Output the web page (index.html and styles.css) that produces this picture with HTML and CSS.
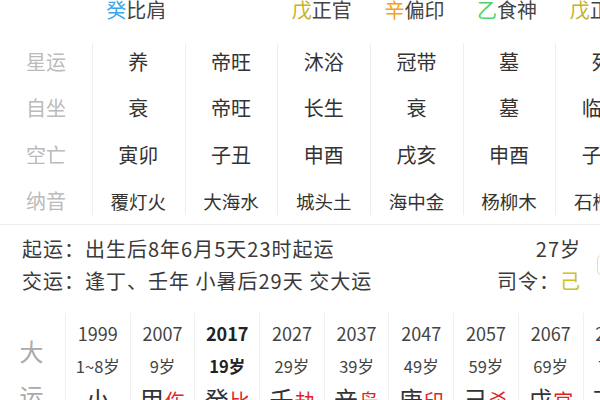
FILE: index.html
```html
<!DOCTYPE html>
<html lang="zh">
<head>
<meta charset="utf-8">
<link rel="stylesheet" href="styles.css">
</head>
<body>
<div class="page">
  <div class="toprow">
    <div class="tcell"></div>
    <div class="tcell"><span class="c-blue">癸</span>比肩</div>
    <div class="tcell"></div>
    <div class="tcell"><span class="c-olive">戊</span>正官</div>
    <div class="tcell"><span class="c-orange">辛</span>偏印</div>
    <div class="tcell"><span class="c-green">乙</span>食神</div>
    <div class="tcell"><span class="c-olive">戊</span>正官</div>
  </div>

  <div class="bazi">
    <div class="bcol labels">
      <div class="bcell">星运</div>
      <div class="bcell">自坐</div>
      <div class="bcell">空亡</div>
      <div class="bcell">纳音</div>
    </div>
    <div class="bcol">
      <div class="bcell">养</div>
      <div class="bcell">衰</div>
      <div class="bcell">寅卯</div>
      <div class="bcell sm">覆灯火</div>
    </div>
    <div class="bcol">
      <div class="bcell">帝旺</div>
      <div class="bcell">帝旺</div>
      <div class="bcell">子丑</div>
      <div class="bcell sm">大海水</div>
    </div>
    <div class="bcol">
      <div class="bcell">沐浴</div>
      <div class="bcell">长生</div>
      <div class="bcell">申酉</div>
      <div class="bcell sm">城头土</div>
    </div>
    <div class="bcol">
      <div class="bcell">冠带</div>
      <div class="bcell">衰</div>
      <div class="bcell">戌亥</div>
      <div class="bcell sm">海中金</div>
    </div>
    <div class="bcol">
      <div class="bcell">墓</div>
      <div class="bcell">墓</div>
      <div class="bcell">申酉</div>
      <div class="bcell sm">杨柳木</div>
    </div>
    <div class="bcol">
      <div class="bcell">死</div>
      <div class="bcell">临官</div>
      <div class="bcell">子丑</div>
      <div class="bcell sm">石榴木</div>
    </div>
  </div>

  <div class="divider"></div>

  <div class="info">
    <div class="info-left">
      <div class="line">起运：出生后8年6月5天23时起运</div>
      <div class="line">交运：逢丁、壬年 小暑后29天 交大运</div>
    </div>
    <div class="info-right">
      <div class="line">27岁</div>
      <div class="line">司令：<span class="c-yellow">己</span></div>
    </div>
    <div class="info-box"></div>
  </div>

  <div class="dayun">
    <div class="dlabel">
      <div>大</div>
      <div>运</div>
    </div>
    <div class="dcol">
      <div class="dyear">1999</div>
      <div class="dage">1~8岁</div>
      <div class="dstem">小</div>
    </div>
    <div class="dcol">
      <div class="dyear">2007</div>
      <div class="dage">9岁</div>
      <div class="dstem">甲<span class="god">伤</span></div>
    </div>
    <div class="dcol cur">
      <div class="dyear">2017</div>
      <div class="dage">19岁</div>
      <div class="dstem">癸<span class="god">比</span></div>
    </div>
    <div class="dcol">
      <div class="dyear">2027</div>
      <div class="dage">29岁</div>
      <div class="dstem">壬<span class="god">劫</span></div>
    </div>
    <div class="dcol">
      <div class="dyear">2037</div>
      <div class="dage">39岁</div>
      <div class="dstem">辛<span class="god">枭</span></div>
    </div>
    <div class="dcol">
      <div class="dyear">2047</div>
      <div class="dage">49岁</div>
      <div class="dstem">庚<span class="god">印</span></div>
    </div>
    <div class="dcol">
      <div class="dyear">2057</div>
      <div class="dage">59岁</div>
      <div class="dstem">己<span class="god">杀</span></div>
    </div>
    <div class="dcol">
      <div class="dyear">2067</div>
      <div class="dage">69岁</div>
      <div class="dstem">戊<span class="god">官</span></div>
    </div>
    <div class="dcol">
      <div class="dyear">2077</div>
      <div class="dage">79岁</div>
      <div class="dstem">丁<span class="god">财</span></div>
    </div>
  </div>
</div>
</body>
</html>
```

FILE: styles.css
```css
html, body {
  margin: 0;
  padding: 0;
  background: #ffffff;
}
body {
  width: 600px;
  height: 400px;
  overflow: hidden;
  font-family: "Noto Sans CJK SC", "Noto Sans", sans-serif;
  color: #333333;
}
.page {
  width: 700px;
}

/* top ten-god row */
.toprow {
  display: grid;
  grid-template-columns: 90px repeat(6, 92.7px);
  height: 20px;
  font-size: 20px;
  line-height: 20px;
  color: #444444;
}
.tcell {
  text-align: center;
  white-space: nowrap;
}
.c-blue { color: #37a6ea; }
.c-olive { color: #c6b228; }
.c-orange { color: #f2a31c; }
.c-green { color: #4fd36a; }
.c-yellow { color: #d1c020; }

/* bazi table */
.bazi {
  display: grid;
  grid-template-columns: 92px repeat(6, 92.7px);
  margin-top: 18px;
}
.bcol {
  display: flex;
  flex-direction: column;
  background: linear-gradient(#eeeeee, #eeeeee) left 5px / 1px 172px no-repeat;
}
.bcol.labels {
  background: none;
  color: #bbbbbb;
}
.bcell {
  height: 46.5px;
  display: flex;
  align-items: center;
  justify-content: center;
  font-size: 20px;
  white-space: nowrap;
}
.bcell.sm {
  font-size: 18.5px;
}
.bcol.labels .bcell.sm {
  font-size: 20px;
}

.divider {
  height: 1px;
  background: #ececec;
}

/* info */
.info {
  display: flex;
  align-items: center;
  width: 640px;
  padding: 8px 0 0 22px;
  box-sizing: border-box;
  font-size: 20px;
  letter-spacing: 1px;
  color: #3a3a3a;
}
.info-left {
  flex: 1;
}
.info-right {
  text-align: right;
  margin-right: -1px;
}
.line {
  height: 32px;
  line-height: 32px;
  white-space: nowrap;
}
.info-box {
  width: 43px;
  height: 20px;
  margin-left: 17px;
  border: 1px solid #e8ddb2;
  border-radius: 4px;
  box-sizing: border-box;
}

/* da yun */
.dayun {
  display: grid;
  grid-template-columns: 65px repeat(9, 64.7px);
  margin-top: 16px;
}
.dlabel {
  padding-top: 15px;
  padding-right: 2px;
  font-size: 24px;
  line-height: 45px;
  color: #aaaaaa;
  text-align: center;
}
.dcol {
  border-left: 1px solid #f0f0f0;
  display: flex;
  flex-direction: column;
  align-items: center;
  color: #444444;
}
.dyear {
  height: 40px;
  line-height: 40px;
  font-size: 18px;
}
.dage {
  height: 26px;
  line-height: 26px;
  font-size: 16.5px;
}
.dstem {
  height: 40px;
  line-height: 40px;
  font-size: 24px;
  color: #333333;
  white-space: nowrap;
}
.god {
  font-size: 20px;
  color: #e02424;
  margin-left: 1px;
}
.cur .dyear,
.cur .dage {
  font-weight: 700;
  color: #222222;
}
```
